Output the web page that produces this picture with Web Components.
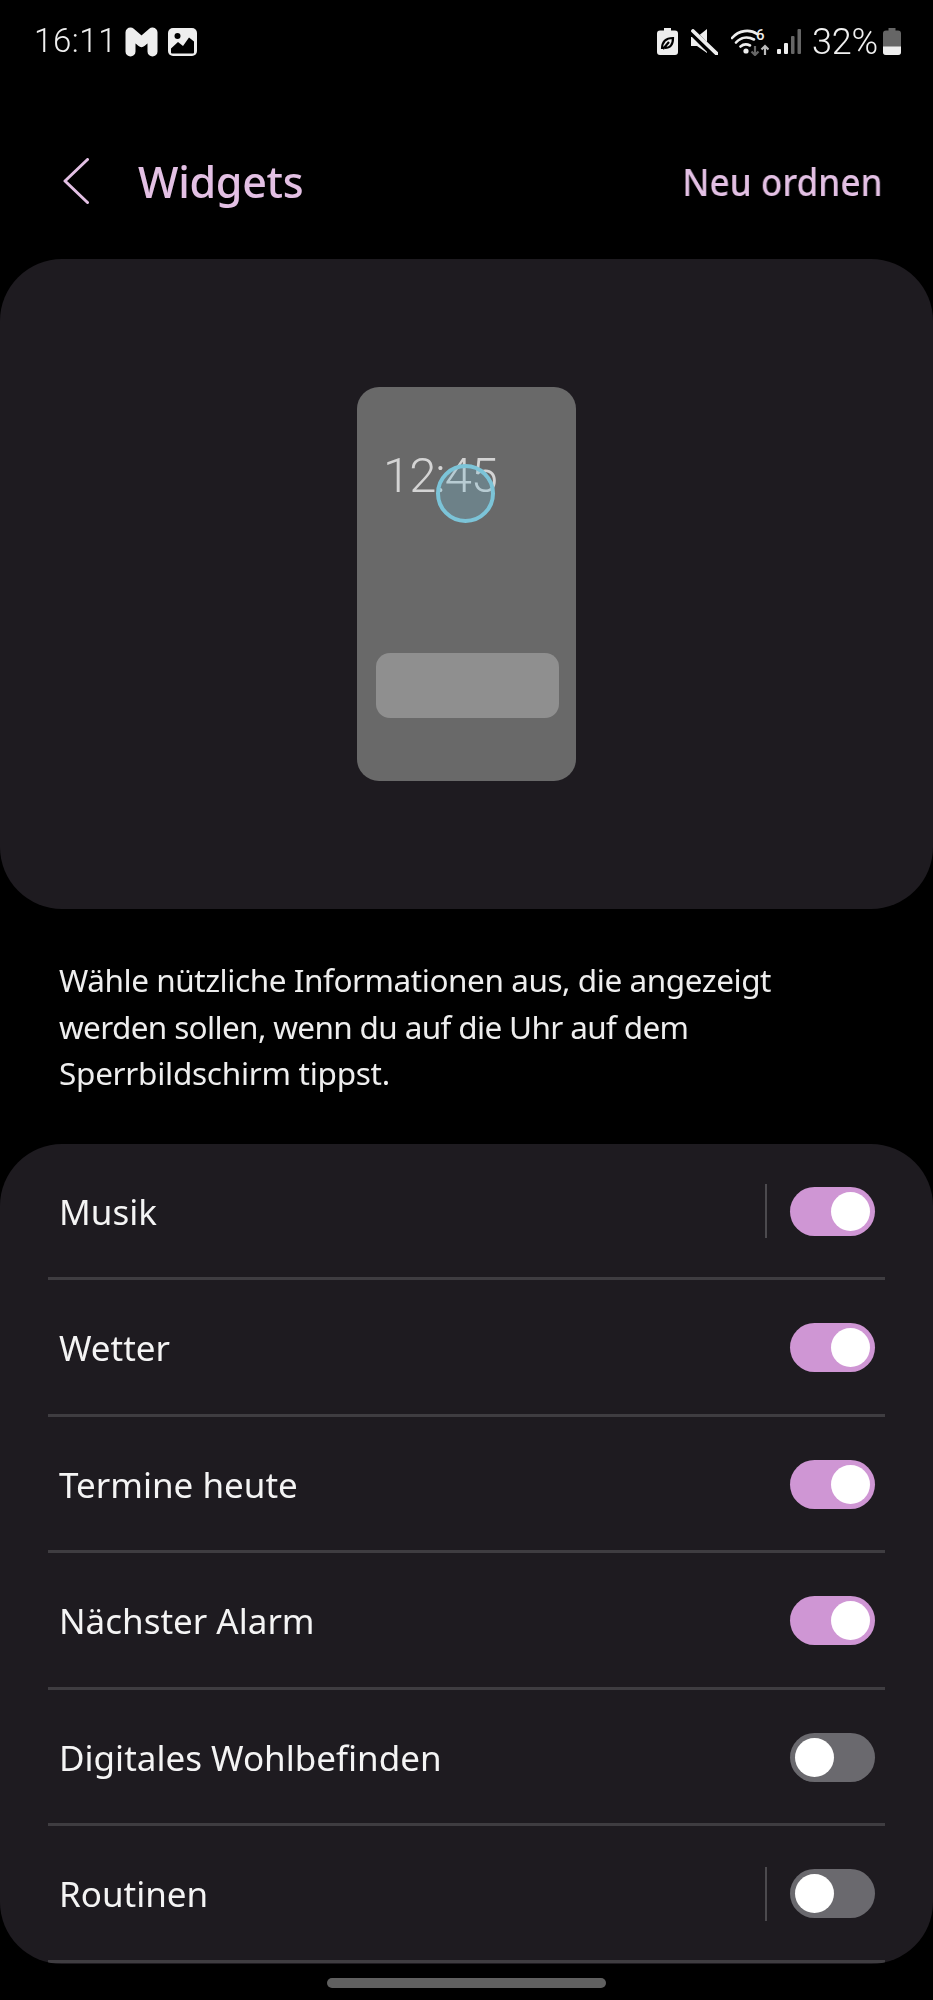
<!DOCTYPE html>
<html lang="de"><head><meta charset="utf-8"><title>Widgets</title>
<style>
html,body{margin:0;background:#000;}
body{width:933px;height:2000px;overflow:hidden;font-family:"Noto Sans","Liberation Sans",sans-serif;color:#f2f2f2;}
</style></head><body>
<status-bar></status-bar>
<app-header heading="Widgets" action="Neu ordnen"></app-header>
<preview-card></preview-card>
<help-text><span style="display:block;letter-spacing:-.44px">Wähle nützliche Informationen aus, die angezeigt</span><span style="display:block;letter-spacing:-.65px">werden sollen, wenn du auf die Uhr auf dem</span><span style="display:block;letter-spacing:-.27px">Sperrbildschirm tippst.</span></help-text>
<widget-list>
  <widget-row label="Musik" on divider></widget-row>
  <widget-row label="Wetter" on></widget-row>
  <widget-row label="Termine heute" on></widget-row>
  <widget-row label="Nächster Alarm" on></widget-row>
  <widget-row label="Digitales Wohlbefinden"></widget-row>
  <widget-row label="Routinen" divider></widget-row>
</widget-list>
<home-bar></home-bar>
<script>
function def(name, css, html){
  customElements.define(name, class extends HTMLElement{
    connectedCallback(){
      if(this.shadowRoot) return;
      const r=this.attachShadow({mode:'open'});
      r.innerHTML='<style>'+css+'</style>'+(typeof html==='function'?html(this):html);
    }
  });
}
def('status-bar',`
:host{display:flex;align-items:center;height:83px;box-sizing:border-box;padding:0 32px 0 34px;font-family:Roboto,"Noto Sans",sans-serif;font-weight:300;color:#f0f0f0;}
.t{font-size:33px;line-height:1;letter-spacing:.6px;margin:0 8px 3px 0;will-change:transform;}
.l,.r{display:flex;align-items:center;}
.sp{flex:1;}
svg{display:block;}
.p{font-size:36px;line-height:1;margin:0 5px 0 11px;letter-spacing:-.2px;will-change:transform;}
`,`
<div class="l"><span class="t">16:11</span>
<svg width="33" height="30" viewBox="0 0 33 30" style="margin-right:10px"><path d="M5.500 24.500V5.500L16.500 15 27.500 5.500V24.500" fill="none" stroke="#eee" stroke-width="10" stroke-linecap="round" stroke-linejoin="round"/></svg>
<svg width="29" height="28" viewBox="0 0 29 28"><rect width="29" height="28" rx="5" fill="#eee"/><rect x="3" y="21" width="23" height="4.500" fill="#000" rx="1"/><path d="M3 20.500 10 14 15 18 21 9.500 26 13.500V22H3Z" fill="#000"/><circle cx="9.500" cy="8" r="3" fill="#000"/></svg></div>
<div class="sp"></div>
<div class="r">
<svg width="21" height="27" viewBox="0 0 21 27" style="margin-right:13px"><path d="M7 0h7v2.500h4a3 3 0 0 1 3 3V24a3 3 0 0 1-3 3H3a3 3 0 0 1-3-3V5.500a3 3 0 0 1 3-3h4Z" fill="#eee"/><path d="M5 21C5 14 9 10 16 10c0 7-3 10-8 10M6 21 12 14" fill="none" stroke="#000" stroke-width="2.200"/></svg>
<svg width="27" height="26" viewBox="0 0 27 26" style="margin-right:13px"><path d="M0 8h6L16 0V24L6 17H0Z" fill="#eee"/><path d="M-1 1 24 26" stroke="#000" stroke-width="7"/><path d="M2 2 26 25" stroke="#eee" stroke-width="3.800" stroke-linecap="round"/></svg>
<svg width="38" height="34" viewBox="0 -6 38 34" style="margin:-6px 8px 0 0"><path d="M1 10C8 2 19 1 26 6M5 14.500C10 9 17 8.500 23 11.500M9.500 18.500C12.500 16 16 16 19 17.500" fill="none" stroke="#eee" stroke-width="2.600" stroke-linecap="round"/><circle cx="15" cy="23" r="2.600" fill="#eee"/><text x="25" y="12" font-family="Roboto" font-size="15" font-weight="500" fill="#eee">6</text><path d="M24 18V27M20.500 23.500 24 27 27.500 23.500" fill="none" stroke="#666" stroke-width="2.200"/><path d="M34 27V18M30.500 21.500 34 18 37.500 21.500" fill="none" stroke="#bbb" stroke-width="2.200"/></svg>
<svg width="24" height="25" viewBox="0 0 24 25"><rect x="0" y="20" width="4" height="5" rx="1" fill="#eee"/><rect x="7" y="14" width="4" height="11" rx="1" fill="#eee"/><rect x="14" y="7" width="3.500" height="18" rx="1" fill="#666"/><rect x="20.500" y="0" width="3.500" height="25" rx="1" fill="#666"/></svg>
<span class="p">32%</span>
<svg width="18" height="27" viewBox="0 0 18 27"><path d="M5.500 0h7v2.500H15a3 3 0 0 1 3 3V24a3 3 0 0 1-3 3H3a3 3 0 0 1-3-3V5.500a3 3 0 0 1 3-3h2.500Z" fill="#666"/><path d="M0 18.500H18V24a3 3 0 0 1-3 3H3a3 3 0 0 1-3-3Z" fill="#eee"/></svg>
</div>`);
def('app-header',`
:host{display:flex;align-items:center;height:176px;box-sizing:border-box;padding:20px 50px 0 63px;color:#e3c0e4;}
svg{display:block;margin-right:49px;}
h1{margin:0;font-size:43px;font-weight:500;line-height:1;flex:1;letter-spacing:-.3px;will-change:transform;}
span{font-size:38px;font-weight:500;line-height:1;transform:scaleX(.925);transform-origin:right center;will-change:transform;}
`,el=>`<svg width="26" height="46" viewBox="0 0 26 46"><path d="M24.500 1.500 2 23 24.500 44.500" fill="none" stroke="currentColor" stroke-width="3" stroke-linecap="round" stroke-linejoin="round"/></svg><h1>${el.getAttribute('heading')}</h1><span>${el.getAttribute('action')}</span>`);
def('preview-card',`
:host{display:flex;align-items:center;justify-content:center;height:650px;background:#1e1b20;border-radius:62px;}
.phone{position:relative;width:219px;height:394px;box-sizing:border-box;background:#696969;border-radius:22px;padding:64px 17px 0 19px;display:flex;flex-direction:column;}
.clock{font-family:Roboto,sans-serif;font-weight:300;font-size:49px;line-height:1;color:#d4d4d4;padding-left:7px;height:202px;letter-spacing:-1px;will-change:transform;}
.bar{height:65px;background:#8f8f8f;border-radius:14px;}
.touch{position:absolute;left:79px;top:77px;width:59px;height:59px;box-sizing:border-box;border:4px solid #7cc4d8;border-radius:50%;background:rgba(120,185,210,.3);}
`,`<div class="phone"><div class="clock">12:45</div><div class="bar"></div><div class="touch"></div></div>`);
def('help-text',`
:host{display:block;box-sizing:border-box;height:234.500px;padding:48px 40px 0 59px;font-size:31.500px;line-height:46.500px;color:#eee;will-change:transform;}
`,`<slot></slot>`);
def('widget-list',`
:host{display:block;height:820px;background:#1e1b20;border-radius:62px;overflow:hidden;}
`,`<slot></slot>`);
def('widget-row',`
:host{display:flex;align-items:center;height:136.500px;box-sizing:border-box;margin:0 48px;padding:2px 10.500px 0 11px;border-bottom:3px solid #3f3d41;font-size:35px;color:#f4f4f4;}
.lab{flex:1;line-height:1;will-change:transform;}
.div{width:2px;height:54px;background:#4c4a4e;margin-right:23px;}
`,el=>`<span class="lab">${el.getAttribute('label')}</span>${el.hasAttribute('divider')?'<span class="div"></span>':''}<toggle-switch ${el.hasAttribute('on')?'on':''}></toggle-switch>`);
def('toggle-switch',`
:host{display:flex;align-items:center;width:85px;height:49px;box-sizing:border-box;padding:0 5px;border-radius:25px;background:#6a696e;justify-content:flex-start;}
:host([on]){background:#cf96d4;justify-content:flex-end;}
i{display:block;width:39px;height:39px;border-radius:50%;background:#fff;}
`,`<i></i>`);
def('home-bar',`
:host{display:flex;justify-content:center;padding-top:14px;}
i{display:block;width:279px;height:10px;border-radius:5px;background:#606060;}
`,`<i></i>`);
</script>
</body></html>
